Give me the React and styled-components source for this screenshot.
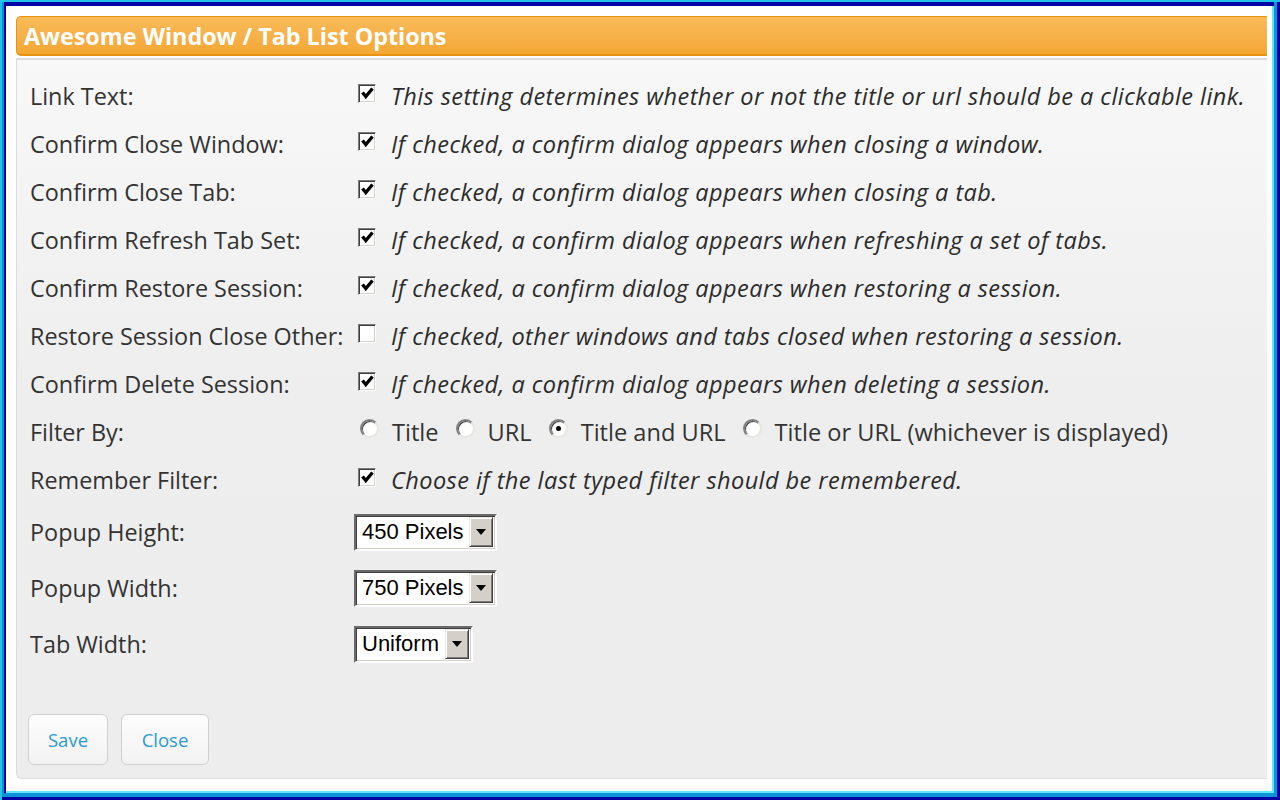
import React from "react";
import styled, { createGlobalStyle } from "styled-components";

const Global = createGlobalStyle`
  html, body { margin: 0; padding: 0; background: #fff; }
  body { font-family: "Open Sans", "Noto Sans", sans-serif; }
  * { box-sizing: border-box; }
`;

const Frame = styled.div`
  width: 1280px;
  height: 800px;
  padding: 16px 13px 21px 16px;
  background: #fff;
  display: flex;
  flex-direction: column;
  box-shadow: inset 2px 2px 0 #1ec3e6, inset -3px -3px 0 #0000a2,
    inset 4px 0 0 #0a8fd4, inset -6px -7px 0 #0d93d6,
    inset 6px 6px 0 #0000a2, inset -8px -9px 0 #5ee9fb;
`;

const Header = styled.div`
  height: 40px;
  flex: none;
  border: 1px solid #e8930f;
  border-bottom-width: 2px;
  border-right: none;
  border-radius: 5px 0 0 5px;
  background: linear-gradient(#f8bb58, #f6b048 55%, #f5a733);
  color: #fff;
  font-family: "Open Sans", sans-serif;
  font-weight: 700;
  font-size: 23.3px;
  padding-left: 7px;
  display: flex;
  align-items: center;
`;

const Panel = styled.div`
  margin-top: 2px;
  flex: 1;
  border: 1px solid #dcdcdc;
  border-top-width: 2px;
  border-right: none;
  border-radius: 0 0 0 6px;
  background: linear-gradient(#f8f8f8, #eeeeee 45%, #ededed);
  padding: 12px 0 13px 13px;
  display: flex;
  flex-direction: column;
`;

const Row = styled.div`
  display: flex;
  align-items: center;
  height: ${(p) => (p.tall ? 56 : 48)}px;
`;

const Label = styled.div`
  width: 324px;
  flex: none;
  font-size: 23.4px;
  color: #333;
  white-space: nowrap;
`;

const Value = styled.div`
  display: flex;
  align-items: center;
`;

const Desc = styled.span`
  font-style: italic;
  font-size: 23.5px;
  letter-spacing: 0.45px;
  color: #2b2b2b;
  white-space: nowrap;
  margin-left: 15px;
`;

const CheckBox = styled.span`
  width: 18px;
  height: 19px;
  margin-left: 4px;
  margin-top: -6px;
  background: #fff;
  border: 1px solid;
  border-color: #7a7a7a #fff #fff #7a7a7a;
  box-shadow: inset 1px 1px 0 #404040, inset -1px -1px 0 #d4d0c8;
  display: flex;
  align-items: center;
  justify-content: center;
`;

const RadioItem = styled.label`
  display: flex;
  align-items: center;
  margin-right: 17px;
  font-size: 23.6px;
  color: #333;
  white-space: nowrap;
`;

const RadioText = styled.span`
  margin-left: 13px;
`;

const RadioCircle = styled.span`
  width: 19px;
  height: 19px;
  margin-left: ${(p) => (p.first ? 6 : 0)}px;
  margin-top: -7px;
  border-radius: 50%;
  background: #fff;
  border: 2px solid;
  border-color: #808080 #e8e6e0 #e8e6e0 #808080;
  box-shadow: inset 1px 1px 0 #404040;
  display: flex;
  align-items: center;
  justify-content: center;
`;

const Dot = styled.span`
  width: 5px;
  height: 5px;
  border-radius: 50%;
  background: #000;
`;

const SelectBox = styled.div`
  width: ${(p) => p.w}px;
  height: 37px;
  background: #fff;
  border: 2px solid;
  border-color: #6a6a6a #fff #fff #6a6a6a;
  box-shadow: inset 1px 1px 0 #404040, inset -1px -1px 0 #d4d0c8;
  display: flex;
  align-items: center;
  justify-content: space-between;
  padding: 2px 2px 2px 6px;
  font-family: "Liberation Sans", Arial, sans-serif;
  font-size: 22px;
  color: #000;
`;

const DropButton = styled.span`
  width: 24px;
  height: 30px;
  background: #d4d0c8;
  border: 1px solid;
  border-color: #e8e6e0 #404040 #404040 #e8e6e0;
  box-shadow: inset 1px 1px 0 #fff, inset -1px -1px 0 #808080;
  display: flex;
  align-items: center;
  justify-content: center;
`;

const ButtonBar = styled.div`
  display: flex;
  gap: 13px;
  margin-top: 42px;
  margin-left: -2px;
`;

const Button = styled.button`
  height: 51px;
  width: ${(p) => p.w}px;
  border: 1px solid #cfcfcf;
  border-radius: 6px;
  background: linear-gradient(#fdfdfd, #f2f2f2);
  font-family: "Open Sans", sans-serif;
  font-size: 18.5px;
  color: #2a9ad4;
  padding: 0;
  cursor: pointer;
`;

const Check = () => (
  <svg width="13" height="12" viewBox="0 0 13 12">
    <path d="M1.5 5.5 L4.8 9.5 L11.5 1.5" fill="none" stroke="#000" strokeWidth="3.4" />
  </svg>
);

const Arrow = () => (
  <svg width="10" height="6" viewBox="0 0 10 6">
    <path d="M0 0 H10 L5 6 Z" fill="#000" />
  </svg>
);

const checks = [
  ["Link Text:", true, "This setting determines whether or not the title or url should be a clickable link."],
  ["Confirm Close Window:", true, "If checked, a confirm dialog appears when closing a window."],
  ["Confirm Close Tab:", true, "If checked, a confirm dialog appears when closing a tab."],
  ["Confirm Refresh Tab Set:", true, "If checked, a confirm dialog appears when refreshing a set of tabs."],
  ["Confirm Restore Session:", true, "If checked, a confirm dialog appears when restoring a session."],
  ["Restore Session Close Other:", false, "If checked, other windows and tabs closed when restoring a session."],
  ["Confirm Delete Session:", true, "If checked, a confirm dialog appears when deleting a session."],
];

const radios = [
  ["Title", false],
  ["URL", false],
  ["Title and URL", true],
  ["Title or URL (whichever is displayed)", false],
];

const selects = [
  ["Popup Height:", "450 Pixels", 143],
  ["Popup Width:", "750 Pixels", 143],
  ["Tab Width:", "Uniform", 119],
];

const CheckRow = ({ label, checked, desc }) => (
  <Row>
    <Label>{label}</Label>
    <Value>
      <CheckBox>{checked && <Check />}</CheckBox>
      <Desc>{desc}</Desc>
    </Value>
  </Row>
);

export default function App() {
  return (
    <>
      <Global />
      <Frame>
        <Header>Awesome Window / Tab List Options</Header>
        <Panel>
          {checks.map(([l, c, d]) => (
            <CheckRow key={l} label={l} checked={c} desc={d} />
          ))}
          <Row>
            <Label>Filter By:</Label>
            <Value>
              {radios.map(([t, on], i) => (
                <RadioItem key={t}>
                  <RadioCircle first={i === 0}>{on && <Dot />}</RadioCircle>
                  <RadioText>{t}</RadioText>
                </RadioItem>
              ))}
            </Value>
          </Row>
          <CheckRow
            label="Remember Filter:"
            checked
            desc="Choose if the last typed filter should be remembered."
          />
          {selects.map(([l, v, w]) => (
            <Row tall key={l}>
              <Label>{l}</Label>
              <SelectBox w={w}>
                <span>{v}</span>
                <DropButton>
                  <Arrow />
                </DropButton>
              </SelectBox>
            </Row>
          ))}
          <ButtonBar>
            <Button w={80}>Save</Button>
            <Button w={88}>Close</Button>
          </ButtonBar>
        </Panel>
      </Frame>
    </>
  );
}
